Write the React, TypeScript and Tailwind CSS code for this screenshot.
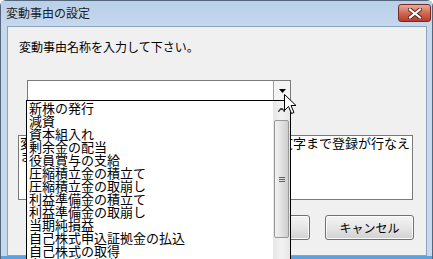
import React from "react";

const items = [
  "新株の発行",
  "減資",
  "資本組入れ",
  "剰余金の配当",
  "役員賞与の支給",
  "圧縮積立金の積立て",
  "圧縮積立金の取崩し",
  "利益準備金の積立て",
  "利益準備金の取崩し",
  "当期純損益",
  "自己株式申込証拠金の払込",
  "自己株式の取得",
  "自己株式の処分",
];

function CloseButton() {
  return (
    <div className="flex h-[18px] w-[33px] items-center justify-center rounded-[3px] border border-[#6e2c22] bg-gradient-to-b from-[#e9ab9a] via-[#cf6a55] to-[#b93a2a]">
      <svg width="14" height="11" viewBox="0 0 14 11">
        <path d="M2 1.5 L12 9.5 M12 1.5 L2 9.5" stroke="#5a1e16" strokeWidth="4" strokeLinecap="square" />
        <path d="M2 1.5 L12 9.5 M12 1.5 L2 9.5" stroke="#ffffff" strokeWidth="2.2" strokeLinecap="square" />
      </svg>
    </div>
  );
}

function Button({ label }: { label: string }) {
  return (
    <div className="flex h-[25px] w-[89px] items-center justify-center rounded-[3px] border border-[#707070] bg-gradient-to-b from-[#f4f4f4] via-[#e6e6e6] to-[#d0d0d0] text-[12px] leading-[14px] shadow-[inset_0_0_0_1px_#fcfcfc]">
      {label}
    </div>
  );
}

function Cursor() {
  return (
    <svg className="absolute left-[284px] top-[94px]" width="14" height="22" viewBox="0 0 14 22">
      <path
        d="M0.5 0.5 L0.5 16.5 L4.5 12.5 L7.5 19.5 L10 18.5 L7 11.5 L12 11.5 Z"
        fill="#ffffff"
        stroke="#000000"
        strokeWidth="1"
        strokeLinejoin="miter"
      />
    </svg>
  );
}

export default function App() {
  return (
    <div className="relative h-[259px] w-[433px] overflow-hidden bg-white font-['Noto_Sans_CJK_JP',sans-serif] text-black">
      <div className="h-[270px] w-[433px] rounded-t-[6px] border border-[#55667c] bg-[#c6d9ee]">
        {/* title bar */}
        <div className="flex h-[25px] items-start justify-between bg-gradient-to-b from-[#b9d0e9] to-[#c4d8ee] pl-[5px] pr-[1px] pt-[3px]">
          <span className="pt-[2px] text-[12px] leading-[14px] text-[#1a1a1a]">変動事由の設定</span>
          <CloseButton />
        </div>

        {/* client area */}
        <div className="relative ml-[6px] h-[230px] w-[420px] border border-[#8ea2ba] bg-[#f0f0f0] pl-[10px] pt-[13px]">
          <div className="ml-[1px] text-[12px] leading-[14px]">変動事由名称を入力して下さい。</div>

          {/* combobox */}
          <div className="ml-[9px] mt-[26px] flex h-[21px] w-[264px] border border-[#7a7a7a] bg-white">
            <div className="flex-1" />
            <div className="flex w-[17px] items-center justify-center border-l border-[#a0a0a0] bg-[#f4f4f4]">
              <svg width="7" height="4" viewBox="0 0 7 4">
                <path d="M0 0 L7 0 L3.5 4 Z" fill="#000" />
              </svg>
            </div>
          </div>

          {/* description text box */}
          <div className="mt-[34px] h-[65px] w-[395px] border border-[#7a7a7a] bg-white pl-[1px] text-[13px] leading-[13px] whitespace-nowrap">
            <div>変動事由名称には、全角・半角を問わず２０文字まで登録が行なえ</div>
            <div>ます。</div>
          </div>

          {/* buttons */}
          <div className="mt-[15px] flex justify-end gap-[15px] pr-[12px]">
            <Button label="OK" />
            <Button label="キャンセル" />
          </div>

          {/* dropped list */}
          <div className="absolute left-[18px] top-[73px] flex h-[170px] w-[265px] border border-black bg-white">
            <div className="flex-1 pl-[2px] text-[13px] leading-[13px]">
              {items.map((it) => (
                <div key={it} className="h-[13px] whitespace-nowrap">
                  {it}
                </div>
              ))}
            </div>
            <div className="flex w-[17px] flex-col bg-gradient-to-r from-[#e6e6e6] via-[#f2f2f2] to-[#e6e6e6]">
              <div className="flex h-[17px] items-center justify-center">
                <svg width="7" height="4" viewBox="0 0 7 4">
                  <path d="M0 4 L3.5 0 L7 4" fill="none" stroke="#404040" strokeWidth="1.4" />
                </svg>
              </div>
              <div className="mx-[1px] mt-[2px] flex h-[118px] items-center justify-center rounded-[2px] border border-[#979797] bg-gradient-to-r from-[#f1f1f1] via-[#e2e2e2] to-[#cdcdcd]">
                <div className="flex w-[6px] flex-col gap-[1px]">
                  <div className="h-px bg-[#5f5f5f]" />
                  <div className="h-px bg-[#5f5f5f]" />
                  <div className="h-px bg-[#5f5f5f]" />
                </div>
              </div>
            </div>
          </div>
        </div>
        <div className="h-[3px] w-full bg-[#5fa1dc]" />
      </div>
      <Cursor />
    </div>
  );
}
